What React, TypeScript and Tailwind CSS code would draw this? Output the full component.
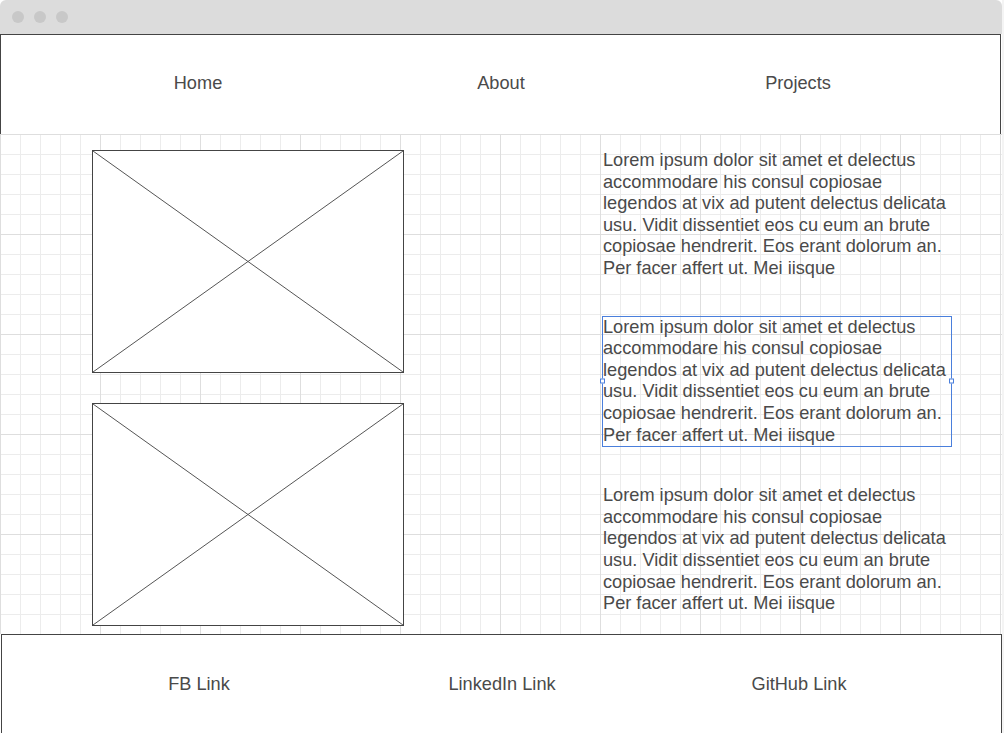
import React from 'react';

const LOREM =
  'Lorem ipsum dolor sit amet et delectus accommodare his consul copiosae legendos at vix ad putent delectus delicata usu. Vidit dissentiet eos cu eum an brute copiosae hendrerit. Eos erant dolorum an. Per facer affert ut. Mei iisque';

const Placeholder = () => (
  <div className="relative w-[312px] h-[223px] border border-[#444] bg-white">
    <svg className="absolute inset-0 w-full h-full" preserveAspectRatio="none" viewBox="0 0 100 100">
      <line x1="0" y1="0" x2="100" y2="100" stroke="#555" strokeWidth="1" vectorEffect="non-scaling-stroke" />
      <line x1="100" y1="0" x2="0" y2="100" stroke="#555" strokeWidth="1" vectorEffect="non-scaling-stroke" />
    </svg>
  </div>
);

const TextBlock = ({ selected, className = '' }: { selected?: boolean; className?: string }) => (
  <div
    className={`relative w-[350px] ${selected ? 'border border-[#4a7fdc] -mx-px mb-[-1px]' : ''} ${className}`}
  >
    <p className="text-[18.2px] leading-[21.6px] text-[#4a4a4a]">{LOREM}</p>
    {selected && (
      <>
        <span className="absolute left-[-3px] top-1/2 -translate-y-1/2 w-[5px] h-[5px] border border-[#4a7fdc] bg-white" />
        <span className="absolute right-[-3px] top-1/2 -translate-y-1/2 w-[5px] h-[5px] border border-[#4a7fdc] bg-white" />
      </>
    )}
  </div>
);

const LinkRow = ({ items }: { items: string[] }) => (
  <div className="grid grid-cols-[306px_300px_294px] ml-[44px]">
    {items.map((item) => (
      <div key={item} className="text-center text-[18.2px] text-[#4a4a4a]">
        {item}
      </div>
    ))}
  </div>
);

export default function App() {
  return (
    <div
      className="w-[1004px] h-[733px] overflow-hidden bg-[#f4f4f4]"
      style={{ fontFamily: '"Liberation Sans", Arial, sans-serif' }}
    >
      <div className="w-[1002px] h-full flex flex-col bg-white">
        {/* window chrome */}
        <div className="h-[34px] shrink-0 bg-[#dcdcdc] rounded-t-[6px] flex items-center gap-[10px] pl-[12px]">
          <span className="w-[12px] h-[12px] rounded-full bg-[#c8c8c8]" />
          <span className="w-[12px] h-[12px] rounded-full bg-[#c8c8c8]" />
          <span className="w-[12px] h-[12px] rounded-full bg-[#c8c8c8]" />
        </div>

        {/* header nav */}
        <div className="h-[101px] shrink-0 w-[1001px] border border-[#444] bg-white flex items-center pb-[2px]">
          <LinkRow items={['Home', 'About', 'Projects']} />
        </div>

        {/* main */}
        <div className="h-[500px] shrink-0 flex -mt-px bg-white bg-[linear-gradient(to_right,#dedede_1px,transparent_1px),linear-gradient(to_bottom,#dedede_1px,transparent_1px),linear-gradient(to_right,#ececec_1px,transparent_1px),linear-gradient(to_bottom,#ececec_1px,transparent_1px)] bg-[size:100px_100px,100px_100px,20px_20px,20px_20px]">
          <div className="pl-[92px] pt-[16px] flex flex-col gap-[30px]">
            <Placeholder />
            <Placeholder />
          </div>
          <div className="ml-[199px] pt-[16px] flex flex-col">
            <TextBlock />
            <TextBlock selected className="mt-[36px]" />
            <TextBlock className="mt-[39px]" />
          </div>
        </div>

        {/* footer */}
        <div className="h-[110px] shrink-0 ml-px w-[1001px] border border-[#444] bg-white flex items-center pb-[8px]">
          <LinkRow items={['FB Link', 'LinkedIn Link', 'GitHub Link']} />
        </div>
      </div>
    </div>
  );
}
